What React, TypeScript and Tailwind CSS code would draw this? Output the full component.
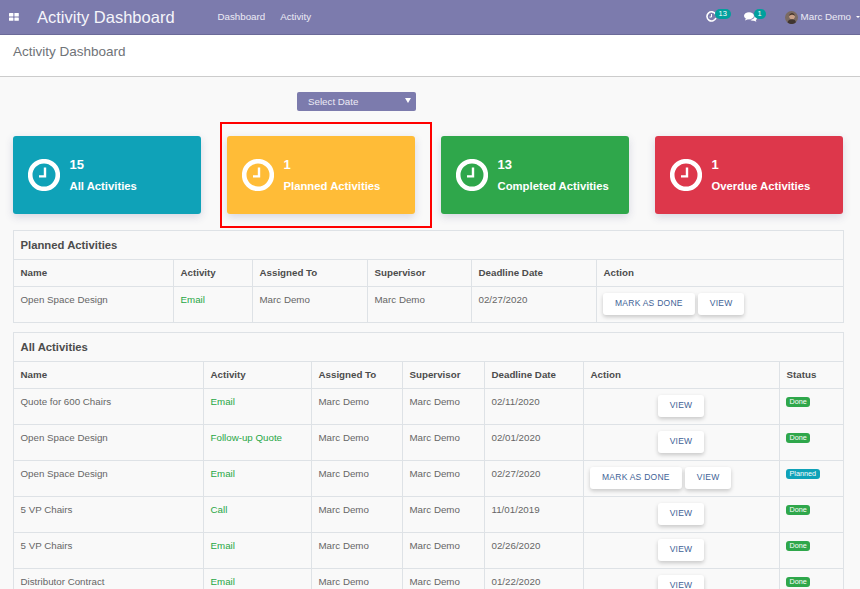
const font = "font-['Liberation_Sans',Arial,sans-serif]"

const cards = [
  { count: 15, label: 'All Activities', color: 'bg-[#0fa2b8]', marked: false },
  { count: 1, label: 'Planned Activities', color: 'bg-[#ffbc37]', marked: true },
  { count: 13, label: 'Completed Activities', color: 'bg-[#2fa74b]', marked: false },
  { count: 1, label: 'Overdue Activities', color: 'bg-[#dd374b]', marked: false },
]

const allRows = [
  { name: 'Quote for 600 Chairs', activity: 'Email', date: '02/11/2020', status: 'Done' },
  { name: 'Open Space Design', activity: 'Follow-up Quote', date: '02/01/2020', status: 'Done' },
  { name: 'Open Space Design', activity: 'Email', date: '02/27/2020', status: 'Planned' },
  { name: '5 VP Chairs', activity: 'Call', date: '11/01/2019', status: 'Done' },
  { name: '5 VP Chairs', activity: 'Email', date: '02/26/2020', status: 'Done' },
  { name: 'Distributor Contract', activity: 'Email', date: '01/22/2020', status: 'Done' },
]

const th = 'border border-[#dee2e6] px-[6.5px] h-[27px] text-left align-middle font-bold text-[9.75px] text-[#4c4c4c]'
const title = 'border border-[#dee2e6] h-[29px] px-[6.5px] pt-[1px] text-left font-bold text-[11.3px] text-[#4c4c4c]'
const cell = 'border border-[#dee2e6] px-[6.5px] pt-[6px] align-top text-[9.75px] leading-[13px]'
const td = `${cell} text-[#666666]`
const tdGreen = `${cell} text-[#28a745]`

function ClockIcon() {
  return (
    <svg width="32" height="32" viewBox="0 0 32 32" className="shrink-0">
      <circle cx="16" cy="16" r="13.8" fill="none" stroke="white" strokeWidth="4.6" />
      <path d="M15.8 8.5h2.4v10H11v-2.3h4.8z" fill="white" />
    </svg>
  )
}

function ActionButton({ label }: { label: string }) {
  return (
    <button className="h-[22px] px-3 pb-[2px] bg-white rounded-[3px] shadow-[0_2px_4px_rgba(0,0,0,0.2)] text-[8.5px] tracking-[0.25px] text-[#3e6296] whitespace-nowrap">
      {label}
    </button>
  )
}

function Badge({ status }: { status: string }) {
  const color = status === 'Done' ? 'bg-[#2fa74b]' : 'bg-[#0fa2b8]'
  return (
    <span className={`block w-fit mt-[2px] -ml-[0.5px] ${color} text-white rounded-[3px] px-[3.5px] h-[10px] text-[7.25px] leading-[10px]`}>
      {status}
    </span>
  )
}

export default function App() {
  return (
    <div className={`${font} h-[589px] overflow-hidden bg-[#f9f9f9]`}>
      <header className="h-[35px] bg-[#7c7bad] border-b border-[#6b6a98] flex items-center text-white">
        <svg width="10" height="8" viewBox="0 0 10 8" className="ml-[8.5px]" fill="white">
          <rect x="0" y="0" width="4.4" height="3.4" rx="0.5" />
          <rect x="5.4" y="0" width="4.4" height="3.4" rx="0.5" />
          <rect x="0" y="4.4" width="4.4" height="3.4" rx="0.5" />
          <rect x="5.4" y="4.4" width="4.4" height="3.4" rx="0.5" />
        </svg>
        <span className="ml-[18.5px] text-[16.5px] w-[180.5px] whitespace-nowrap text-[#f5f5fa]">Activity Dashboard</span>
        <nav className="flex gap-[15px] text-[9.75px] text-[#ecebf5]">
          <span>Dashboard</span>
          <span>Activity</span>
        </nav>
        <div className="ml-auto flex items-center text-[9.75px] text-[#ecebf5]">
          <div className="relative w-[40px] h-[14px]">
            <svg width="11" height="11" viewBox="0 0 11 11" className="absolute left-[2px] top-[1px]" fill="none" stroke="white">
              <path d="M9.6 3.2A4.6 4.6 0 1 0 9.9 7" strokeWidth="1.6" />
              <path d="M5.5 3v3H3.5" strokeWidth="1" />
            </svg>
            <span className="absolute left-[11px] top-[-1px] h-[9.5px] px-[4px] rounded-full bg-[#00a09d] text-white text-[7.5px] leading-[9.5px]">13</span>
          </div>
          <div className="relative w-[41px] h-[14px]">
            <svg width="13" height="10" viewBox="0 0 13 10" className="absolute left-0 top-[2px]" fill="white">
              <ellipse cx="5" cy="3.8" rx="5" ry="3.6" />
              <path d="M2 6l-1 2.4L4.6 7z" />
              <path d="M10.7 3.2C11.9 3.8 13 4.7 13 6c0 .9-.5 1.6-1.2 2.1l.6 1.7-2.6-1.1c-1.5.2-3-.2-3.9-.9 2.900 0 5.200-1.900 4.800-4.600z" />
            </svg>
            <span className="absolute left-[10px] top-[-1px] h-[9.5px] px-[4px] rounded-full bg-[#00a09d] text-white text-[7.5px] leading-[9.5px]">1</span>
          </div>
          <svg width="13" height="13" viewBox="0 0 13 13" className="mr-[3px]">
            <circle cx="6.5" cy="6.5" r="6.5" fill="#7a6a62" />
            <path d="M4 5c0-2 1.300-3 3-3s3 1 3 3l-.300 1.600L8.500 8.500H6L4.500 7z" fill="#c8a088" />
            <path d="M4 5c0-2 1.300-3 3-3s3 1 3 3c-1-1-2.500-1.300-3.500-1.200C5.500 3.900 4.700 4.300 4 5z" fill="#43352d" />
            <path d="M2.500 11.600c.6-2.300 2-3.300 4.500-3.300s3.500 1 4 3A6.500 6.500 0 0 1 2.500 11.600z" fill="#3f3530" />
          </svg>
          <span className="whitespace-nowrap">Marc Demo</span>
          <span className="ml-[5px] w-0 h-0 border-x-[2px] border-x-transparent border-t-[2px] border-t-white" />
        </div>
      </header>

      <div className="h-[42px] bg-white border-b border-[#cccccc] pl-[13px] pt-[9px] text-[13.5px] leading-[16px] text-[#6f7378]">
        Activity Dashboard
      </div>

      <div className="pl-[297px] pt-[15px]">
        <div className="relative w-[119px] h-[19px] bg-[#7c7bad] rounded-[2px] pl-[11px] text-[9.75px] leading-[19px] text-[#ecebf5]">
          Select Date
          <span className="absolute right-[5px] top-[6px] w-0 h-0 border-x-[3px] border-x-transparent border-t-[5px] border-t-white" />
        </div>
      </div>

      <div className="flex gap-[26px] pl-[13px] pt-[25px]">
        {cards.map(card => (
          <div
            key={card.label}
            className={`relative w-[188px] h-[78px] ${card.color} rounded-[3px] shadow-[0_3px_8px_rgba(60,60,120,0.18)] flex items-center pl-[15px] text-white`}
          >
            <ClockIcon />
            <div className="ml-[9.5px] font-bold">
              <div className="text-[13px] leading-[15px]">{card.count}</div>
              <div className="mt-[7px] text-[11.3px] leading-[14px]">{card.label}</div>
            </div>
            {card.marked && <div className="absolute -left-[7px] -right-[17px] -top-[14px] -bottom-[14px] border-2 border-[#ff0000]" />}
          </div>
        ))}
      </div>

      <div className="mx-[13px] mt-[16px]">
        <table className="w-[831px] table-fixed border-collapse">
          <colgroup>
            <col className="w-[160px]" />
            <col className="w-[79px]" />
            <col className="w-[115px]" />
            <col className="w-[104px]" />
            <col className="w-[125px]" />
            <col />
          </colgroup>
          <thead>
            <tr>
              <th colSpan={6} className={title}>Planned Activities</th>
            </tr>
            <tr>
              <th className={th}>Name</th>
              <th className={th}>Activity</th>
              <th className={th}>Assigned To</th>
              <th className={th}>Supervisor</th>
              <th className={th}>Deadline Date</th>
              <th className={th}>Action</th>
            </tr>
          </thead>
          <tbody>
            <tr className="h-[36px]">
              <td className={td}>Open Space Design</td>
              <td className={tdGreen}>Email</td>
              <td className={td}>Marc Demo</td>
              <td className={td}>Marc Demo</td>
              <td className={td}>02/27/2020</td>
              <td className={td}>
                <div className="flex gap-[3px] -ml-[0.5px]">
                  <ActionButton label="MARK AS DONE" />
                  <ActionButton label="VIEW" />
                </div>
              </td>
            </tr>
          </tbody>
        </table>

        <table className="mt-[9px] w-[831px] table-fixed border-collapse">
          <colgroup>
            <col className="w-[190px]" />
            <col className="w-[108px]" />
            <col className="w-[91px]" />
            <col className="w-[82px]" />
            <col className="w-[99px]" />
            <col className="w-[196px]" />
            <col />
          </colgroup>
          <thead>
            <tr>
              <th colSpan={7} className={title}>All Activities</th>
            </tr>
            <tr>
              <th className={th}>Name</th>
              <th className={th}>Activity</th>
              <th className={th}>Assigned To</th>
              <th className={th}>Supervisor</th>
              <th className={th}>Deadline Date</th>
              <th className={th}>Action</th>
              <th className={th}>Status</th>
            </tr>
          </thead>
          <tbody>
            {allRows.map((row, i) => (
              <tr key={i} className="h-[36px]">
                <td className={td}>{row.name}</td>
                <td className={tdGreen}>{row.activity}</td>
                <td className={td}>Marc Demo</td>
                <td className={td}>Marc Demo</td>
                <td className={td}>{row.date}</td>
                <td className={td}>
                  {row.status === 'Planned' ? (
                    <div className="flex gap-[3px] -ml-[0.5px]">
                      <ActionButton label="MARK AS DONE" />
                      <ActionButton label="VIEW" />
                    </div>
                  ) : (
                    <div className="flex justify-center pr-[1px]">
                      <ActionButton label="VIEW" />
                    </div>
                  )}
                </td>
                <td className={td}><Badge status={row.status} /></td>
              </tr>
            ))}
          </tbody>
        </table>
      </div>
    </div>
  )
}
